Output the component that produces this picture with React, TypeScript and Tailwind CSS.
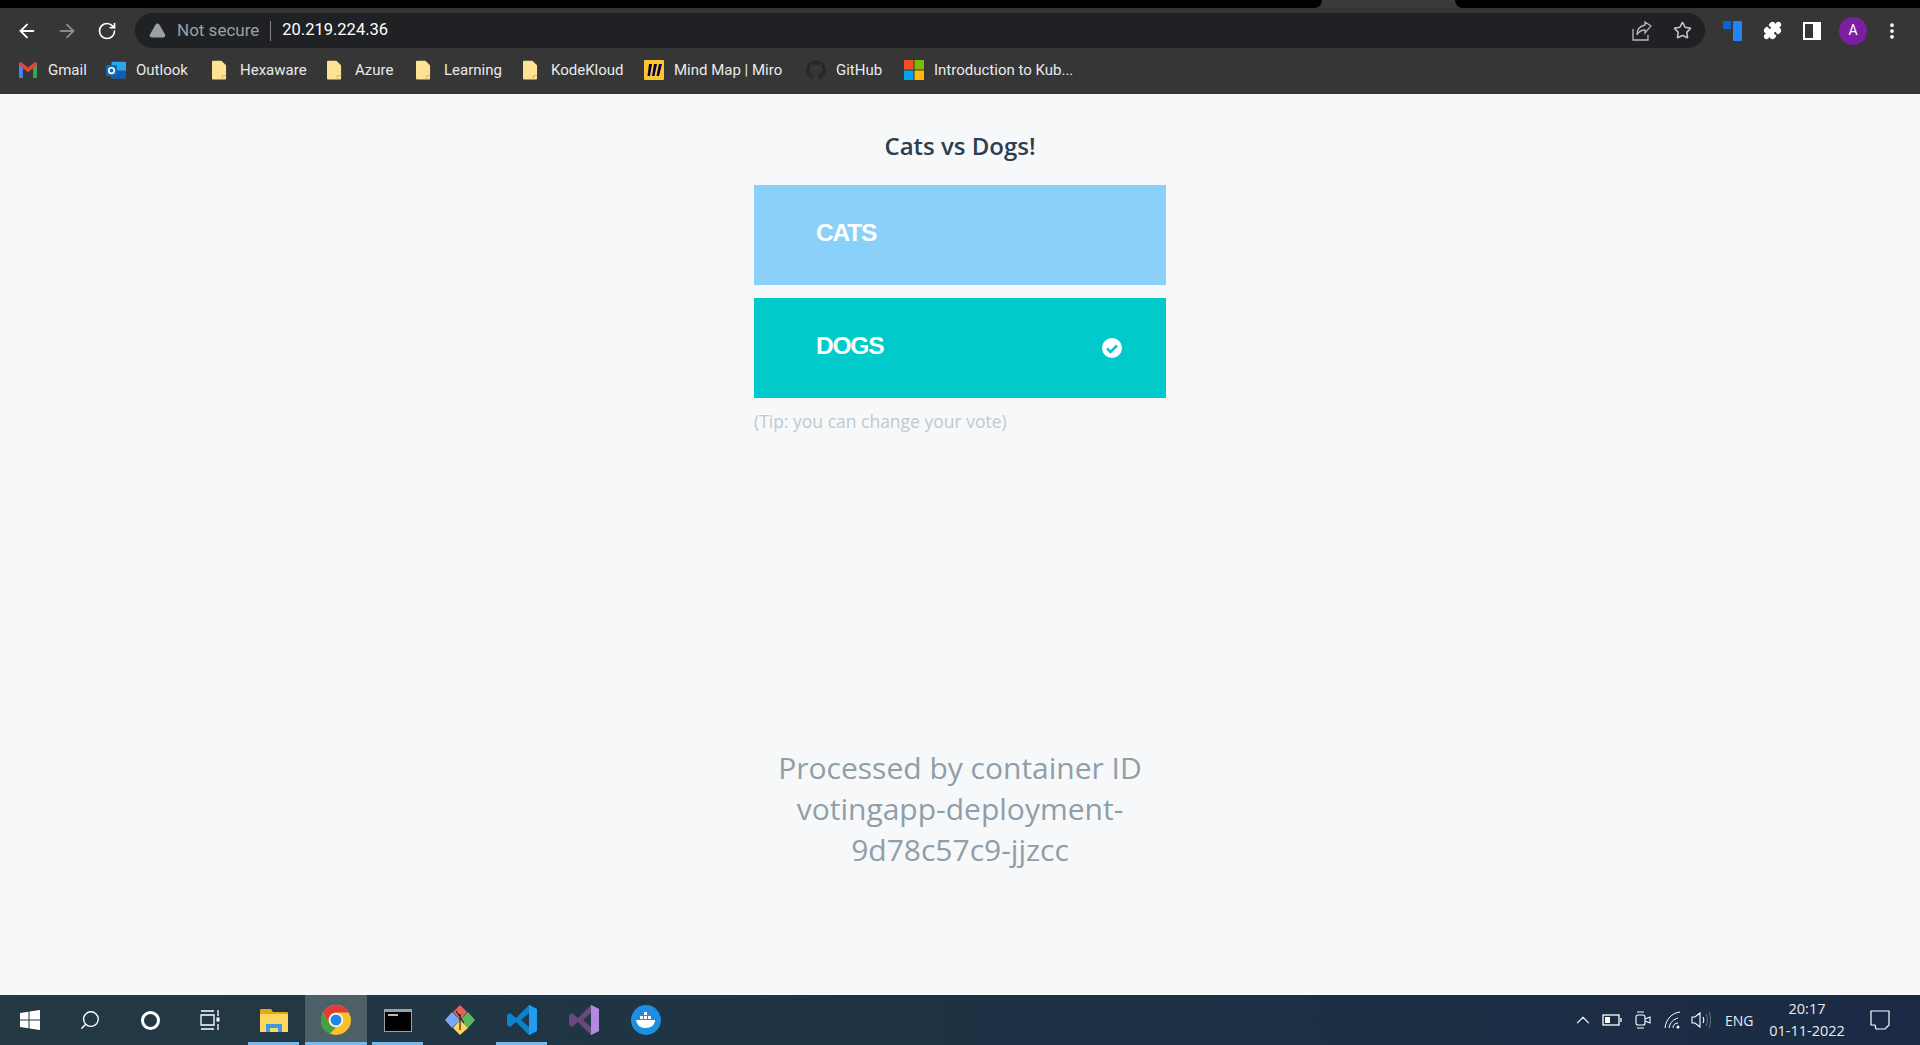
import { ArrowLeft, ArrowRight, RotateCw, TriangleAlert, Star, EllipsisVertical, ChevronUp, Search, Puzzle } from "lucide-react";

const SEGOE = "font-['Open_Sans','Noto_Sans',sans-serif]";

function Folder() {
  return (
    <svg width="15" height="20" viewBox="0 0 16 20">
      <path d="M1 0h9l5 5v14a1 1 0 0 1-1 1H1a1 1 0 0 1-1-1V1a1 1 0 0 1 1-1z" fill="#fde293" />
      <path d="M11 20v-4h4" fill="none" stroke="#d9b44a" strokeWidth="1" />
    </svg>
  );
}

function Gmail() {
  return (
    <svg width="18" height="16" viewBox="0 0 16 14">
      <path d="M0 2v11a1 1 0 0 0 1 1h2.500V5z" fill="#4285f4" />
      <path d="M16 2v11a1 1 0 0 1-1 1h-2.500V5z" fill="#34a853" />
      <path d="M0 2.500 8 9l8-6.500V1.500C16 .3 14.700-.4 13.700.3L8 4.800 2.300.3C1.300-.4 0 .3 0 1.500z" fill="#ea4335" />
    </svg>
  );
}

function OutlookIcon() {
  return (
    <svg width="20" height="20" viewBox="0 0 18 17">
      <rect x="5" y="1" width="13" height="15" rx="1" fill="#28a8ea" />
      <rect x="5" y="9" width="13" height="7" fill="#0a5fb4" />
      <rect x="0" y="4" width="10" height="10" rx="1" fill="#0f6cbd" />
      <circle cx="5" cy="9" r="2.500" fill="none" stroke="#fff" strokeWidth="1.500" />
    </svg>
  );
}

function Miro() {
  return (
    <svg width="20" height="20" viewBox="0 0 20 20">
      <rect width="20" height="20" rx="1" fill="#fcc630" />
      <path d="M5 4h3L6 16H3.500zM10 4h3l-2.500 12H8zM15 4h3l-3 12h-2.500z" fill="#050038" />
    </svg>
  );
}

function GithubIcon() {
  return (
    <svg width="20" height="20" viewBox="0 0 16 16">
      <path
        d="M8 0a8 8 0 0 0-2.500 15.600c.4.100.5-.2.500-.4v-1.400c-2.200.5-2.700-1-2.700-1-.4-.9-.9-1.200-.9-1.200-.7-.5.100-.5.100-.5.800.1 1.200.8 1.200.8.700 1.200 1.900.9 2.300.7.100-.5.300-.9.500-1.100-1.800-.2-3.600-.9-3.600-4 0-.9.300-1.600.8-2.100-.1-.2-.4-1 .1-2.100 0 0 .7-.2 2.200.8a7.500 7.500 0 0 1 4 0c1.500-1 2.200-.8 2.200-.8.400 1.100.2 1.900.1 2.100.5.600.8 1.300.8 2.100 0 3.100-1.900 3.700-3.700 3.900.3.300.6.800.6 1.500v2.200c0 .2.100.5.600.4A8 8 0 0 0 8 0z"
        fill="#24292e"
      />
    </svg>
  );
}

function MsLogo() {
  return (
    <svg width="20" height="20" viewBox="0 0 20 20">
      <rect width="9.500" height="9.500" fill="#f25022" />
      <rect x="10.500" width="9.500" height="9.500" fill="#7fba00" />
      <rect y="10.500" width="9.500" height="9.500" fill="#00a4ef" />
      <rect x="10.500" y="10.500" width="9.500" height="9.500" fill="#ffb900" />
    </svg>
  );
}

function Bookmark({ icon, label, width, iconWidth }: { icon: React.ReactNode; label: string; width: string; iconWidth: string }) {
  return (
    <div className={`flex items-center ${width}`}>
      <div className={`${iconWidth} shrink-0 flex items-center`}>{icon}</div>
      <span className="text-[15px] text-[#e8eaed] font-['Roboto',sans-serif] whitespace-nowrap">{label}</span>
    </div>
  );
}

function TaskButton({ children, active, open }: { children: React.ReactNode; active?: boolean; open?: boolean }) {
  return (
    <div className={`relative w-[62px] h-[50px] flex items-center justify-center ${active ? "bg-[#4d6068]" : ""}`}>
      {children}
      {open && <div className={`absolute bottom-0 h-[3px] bg-[#76b9ed] ${active ? "left-0 right-0" : "left-[5px] right-[6px]"}`} />}
    </div>
  );
}

export default function App() {
  return (
    <div className="h-[1045px] flex flex-col overflow-hidden bg-[#f7f8f9]">
      {/* chrome */}
      <div className="bg-[#363636] h-[94px] shrink-0 flex flex-col">
        <div className="h-[8px] flex shrink-0">
          <div className="w-[1322px] bg-black rounded-br-[8px]" />
          <div className="w-[133px] bg-[#3a3a3a]" />
          <div className="flex-1 bg-black rounded-bl-[8px]" />
        </div>
        <div className="h-[35px] mt-[5px] flex items-center">
          <div className="w-[135px] shrink-0 flex items-center pl-[16px] gap-[18px]">
            <ArrowLeft size={22} className="text-white" strokeWidth={2} />
            <ArrowRight size={22} className="text-[#8a8b8c]" strokeWidth={2} />
            <RotateCw size={20} className="text-white ml-[1px]" strokeWidth={2} />
          </div>
          <div className="w-[1570px] h-[35px] bg-[#202124] rounded-full flex items-center pl-[14px] pr-[13px]">
            <TriangleAlert size={17} className="text-[#9aa0a6]" fill="#9aa0a6" stroke="#9aa0a6" />
            <span className="ml-[11px] text-[17px] text-[#9aa0a6] font-['Roboto',sans-serif]">Not secure</span>
            <div className="w-px h-[20px] bg-[#80868b] mx-[11px]" />
            <span className="text-[16.5px] text-white font-['Roboto',sans-serif]">20.219.224.36</span>
            <div className="flex-1" />
            <svg width="20" height="20" viewBox="0 0 20 20" fill="none" stroke="#b5b8bb" strokeWidth="1.300" className="mr-[21px]">
              <path d="M1 8v11h15v-5" />
              <path d="M19 5l-6-4v3C8 5 5 9 5 14c2-4 5-5 8-5v3z" />
            </svg>
            <Star size={19} className="text-[#c4c7c9]" strokeWidth={2} />
          </div>
          <div className="flex-1 flex items-center pl-[18px]">
            <div className="flex gap-[2px] w-[20px] shrink-0">
              <div className="w-[8px] h-[8px] bg-[#0b63d6] rounded-[1px]" />
              <div className="w-[9px] h-[20px] bg-[#2585f7] rounded-[1px]" />
            </div>
            <Puzzle size={19} className="text-white ml-[20px]" fill="#fff" />
            <div className="ml-[21px] w-[18px] h-[18px] border-[2px] border-white border-l-[8px] bg-[#363636] rotate-180" />
            <div className="ml-[18px] w-[28px] h-[28px] rounded-full bg-[#7b1fa2] flex items-center justify-center text-[14px] text-white font-['Roboto',sans-serif]">A</div>
            <EllipsisVertical size={20} className="text-white ml-[15px]" strokeWidth={2.500} />
          </div>
        </div>
        <div className="h-[36px] mt-[4px] flex items-center pl-[19px]">
          <Bookmark icon={<Gmail />} iconWidth="w-[29px]" label="Gmail" width="w-[87px]" />
          <Bookmark icon={<OutlookIcon />} iconWidth="w-[30px]" label="Outlook" width="w-[106px]" />
          <Bookmark icon={<Folder />} iconWidth="w-[28px]" label="Hexaware" width="w-[115px]" />
          <Bookmark icon={<Folder />} iconWidth="w-[28px]" label="Azure" width="w-[89px]" />
          <Bookmark icon={<Folder />} iconWidth="w-[28px]" label="Learning" width="w-[107px]" />
          <Bookmark icon={<Folder />} iconWidth="w-[28px]" label="KodeKloud" width="w-[121px]" />
          <Bookmark icon={<Miro />} iconWidth="w-[30px]" label="Mind Map | Miro" width="w-[162px]" />
          <Bookmark icon={<GithubIcon />} iconWidth="w-[30px]" label="GitHub" width="w-[98px]" />
          <div className="flex items-center">
            <div className="w-[30px] shrink-0 flex items-center"><MsLogo /></div>
            <span className="text-[15px] text-[#e8eaed] font-['Roboto',sans-serif] whitespace-nowrap">Introduction to Kub...</span>
          </div>
        </div>
      </div>

      {/* page */}
      <div className={`flex-1 flex flex-col items-center ${SEGOE}`}>
        <h3 className="mt-[35px] text-[24px] leading-[33px] font-semibold text-[#2c3e50] text-center">Cats vs Dogs!</h3>
        <div className="w-[412px] mt-[23px] flex flex-col gap-[13px]">
          <button className="h-[100px] bg-[#89d1f9] flex items-center px-[62px] text-white">
            <span className="font-['Liberation_Sans',sans-serif] font-bold text-[24.5px] -mt-[3px] -tracking-[1.2px]">CATS</span>
          </button>
          <button className="h-[100px] bg-[#00cbca] flex items-center justify-between pl-[62px] pr-[44px] text-white">
            <span className="font-['Liberation_Sans',sans-serif] font-bold text-[24.5px] -mt-[3px] -tracking-[1.2px]">DOGS</span>
            <svg width="20" height="20" viewBox="0 0 20 20">
              <circle cx="10" cy="10" r="10" fill="#fff" />
              <path d="M5 10.500l3.500 3.500L15 7.500" fill="none" stroke="#00cbca" strokeWidth="2.600" />
            </svg>
          </button>
        </div>
        <div className="w-[412px] mt-[11px] text-[17.5px] leading-[24px] text-[#c0c9ce]">(Tip: you can change your vote)</div>
        <div className="mt-[314px] w-[412px] text-center text-[30px] leading-[41px] text-[#8f9ea8]">
          Processed by container ID
          <br />
          votingapp-deployment-
          <br />
          9d78c57c9-jjzcc
        </div>
      </div>

      {/* taskbar */}
      <div className="h-[50px] shrink-0 flex items-center bg-gradient-to-r from-[#233a44] to-[#1a2a44] text-white">
        <div className="w-[60px] flex items-center justify-center">
          <svg width="20" height="20" viewBox="0 0 20 20" fill="#fff">
            <path d="M0 3l8.500-1.200V9.500H0zM9.500 1.600L20 0v9.500H9.500zM0 10.500h8.500v7.700L0 17zM9.500 10.500H20V20L9.500 18.400z" />
          </svg>
        </div>
        <div className="w-[60px] flex items-center justify-center">
          <Search size={22} className="text-white -scale-x-100" strokeWidth={1.500} />
        </div>
        <div className="w-[60px] flex items-center justify-center">
          <div className="w-[19px] h-[19px] rounded-full border-[3px] border-white" />
        </div>
        <div className="w-[63px] pr-[3px] flex items-center justify-center">
          <svg width="20" height="20" viewBox="0 0 20 20" fill="none" stroke="#fff" strokeWidth="1.300">
            <path d="M1 1h13M1 19h13M1 5h13v10H1zM18 0v6M18 14v6" />
            <rect x="16.500" y="7.500" width="3" height="4" fill="#fff" stroke="none" />
          </svg>
        </div>
        <TaskButton open>
          <svg width="28" height="24" viewBox="0 0 28 24">
            <path d="M0 2a1 1 0 0 1 1-1h10l2 3h14a1 1 0 0 1 1 1v18a1 1 0 0 1-1 1H1a1 1 0 0 1-1-1z" fill="#e8a90f" />
            <rect y="6" width="28" height="18" rx="1" fill="#ffd75e" />
            <path d="M6 24v-8h16v8h-4v-4h-8v4z" fill="#3b9ae0" />
          </svg>
        </TaskButton>
        <TaskButton active open>
          <svg width="30" height="30" viewBox="0 0 30 30">
            <circle cx="15" cy="15" r="15" fill="#fbc02d" />
            <path d="M15 0a15 15 0 0 1 13 7.500H15a7.500 7.500 0 0 0-6.500 11.250L2 7.500A15 15 0 0 1 15 0z" fill="#e53935" />
            <path d="M2 7.500l6.500 11.250A7.500 7.500 0 0 0 15 22.500L8.500 29A15 15 0 0 1 2 7.500z" fill="#43a047" />
            <circle cx="15" cy="15" r="7" fill="#fff" />
            <circle cx="15" cy="15" r="5.500" fill="#1e88e5" />
          </svg>
        </TaskButton>
        <TaskButton open>
          <div className="w-[28px] h-[23px] bg-black border-t-[3px] border-x border-b border-[#9aa0a6] pl-[3px]">
            <div className="w-[10px] h-[2px] mt-[2px] bg-[#bbb]" />
          </div>
        </TaskButton>
        <TaskButton>
          <svg width="30" height="30" viewBox="0 0 30 30">
            <path d="M15 0l7 7-7 8-7-8z" fill="#e8605a" />
            <path d="M7 7l8 8-8 8-7-8z" fill="#7aa8f5" />
            <path d="M23 7l7 8-7 8-8-8z" fill="#5cb85c" />
            <path d="M15 15l8 8-8 7-7-7z" fill="#fcd45e" />
            <path d="M15 9v16M11 6l8 12" stroke="#222" strokeWidth="1.200" />
          </svg>
        </TaskButton>
        <TaskButton open>
          <svg width="30" height="30" viewBox="0 0 30 30">
            <path d="M22 0l8 4v22l-8 4-13-13-6 5-3-2V10l3-2 6 5z" fill="#0a84d0" />
            <path d="M22 8l-8 7 8 7z" fill="#233a44" />
            <path d="M22 0l8 4v22l-8 4z" fill="#1f9cf0" />
          </svg>
        </TaskButton>
        <TaskButton>
          <svg width="30" height="30" viewBox="0 0 30 30">
            <path d="M22 0l8 4v22l-8 4-13-13-6 5-3-2V10l3-2 6 5z" fill="#68497f" />
            <path d="M22 8l-8 7 8 7z" fill="#233a44" />
            <path d="M22 0l8 4v22l-8 4z" fill="#b18be0" />
          </svg>
        </TaskButton>
        <TaskButton>
          <svg width="30" height="30" viewBox="0 0 30 30">
            <circle cx="15" cy="15" r="15" fill="#1d8fe1" />
            <path d="M5 15h19c0 5-4 8-10 8-5 0-8-3-9-8z" fill="#fff" />
            <path d="M9 11h3v3H9zM13 11h3v3h-3zM17 11h3v3h-3zM13 7h3v3h-3z" fill="#fff" />
          </svg>
        </TaskButton>
        <div className="flex-1" />
        <div className="flex items-center h-full font-['Open_Sans',sans-serif] text-[#e8eaed]">
          <ChevronUp size={22} strokeWidth={1.300} className="mr-[8px]" />
          <svg width="20" height="12" viewBox="0 0 20 12" fill="none" stroke="#fff" strokeWidth="1.300" className="mr-[13px]">
            <rect x="1" y="1" width="16" height="10" />
            <rect x="3" y="3" width="5" height="6" fill="#fff" stroke="none" />
            <path d="M19 4v4" />
          </svg>
          <svg width="16" height="20" viewBox="0 0 16 20" fill="none" stroke="#fff" strokeWidth="1.100" className="mr-[13px]">
            <rect x="1" y="5" width="9" height="10" rx="2" />
            <path d="M10 9l5-2v6l-5-2M2 2h7M2 18h7" />
          </svg>
          <svg width="18" height="18" viewBox="0 0 18 18" fill="none" stroke="#fff" strokeWidth="1" className="mr-[9px]">
            <path d="M1 17C2 8 8 2 16 1M5 17c1-6 5-9 9-10M9 17c0-3 2-5 5-5" />
            <circle cx="14" cy="16" r="1.500" fill="#fff" stroke="none" />
          </svg>
          <svg width="20" height="18" viewBox="0 0 20 18" fill="none" stroke="#fff" strokeWidth="1.100" className="mr-[14px]">
            <path d="M1 6h3l5-4v14l-5-4H1zM12 6c1 2 1 4 0 6" />
            <path d="M15 3c2 4 2 8 0 12M18 1c2 5 2 11 0 16" stroke="#667" />
          </svg>
          <span className="text-[14px] w-[40px]">ENG</span>
          <div className="ml-[2px] w-[80px] text-center text-[14.5px] leading-[22px] whitespace-nowrap">
            <div>20:17</div>
            <div>01-11-2022</div>
          </div>
          <svg width="20" height="20" viewBox="0 0 20 20" fill="none" stroke="#fff" strokeWidth="1.200" className="ml-[23px] mr-[30px]">
            <path d="M1 1h18v14l-4 4H6l-1-4H1z" />
          </svg>
        </div>
      </div>
    </div>
  );
}
